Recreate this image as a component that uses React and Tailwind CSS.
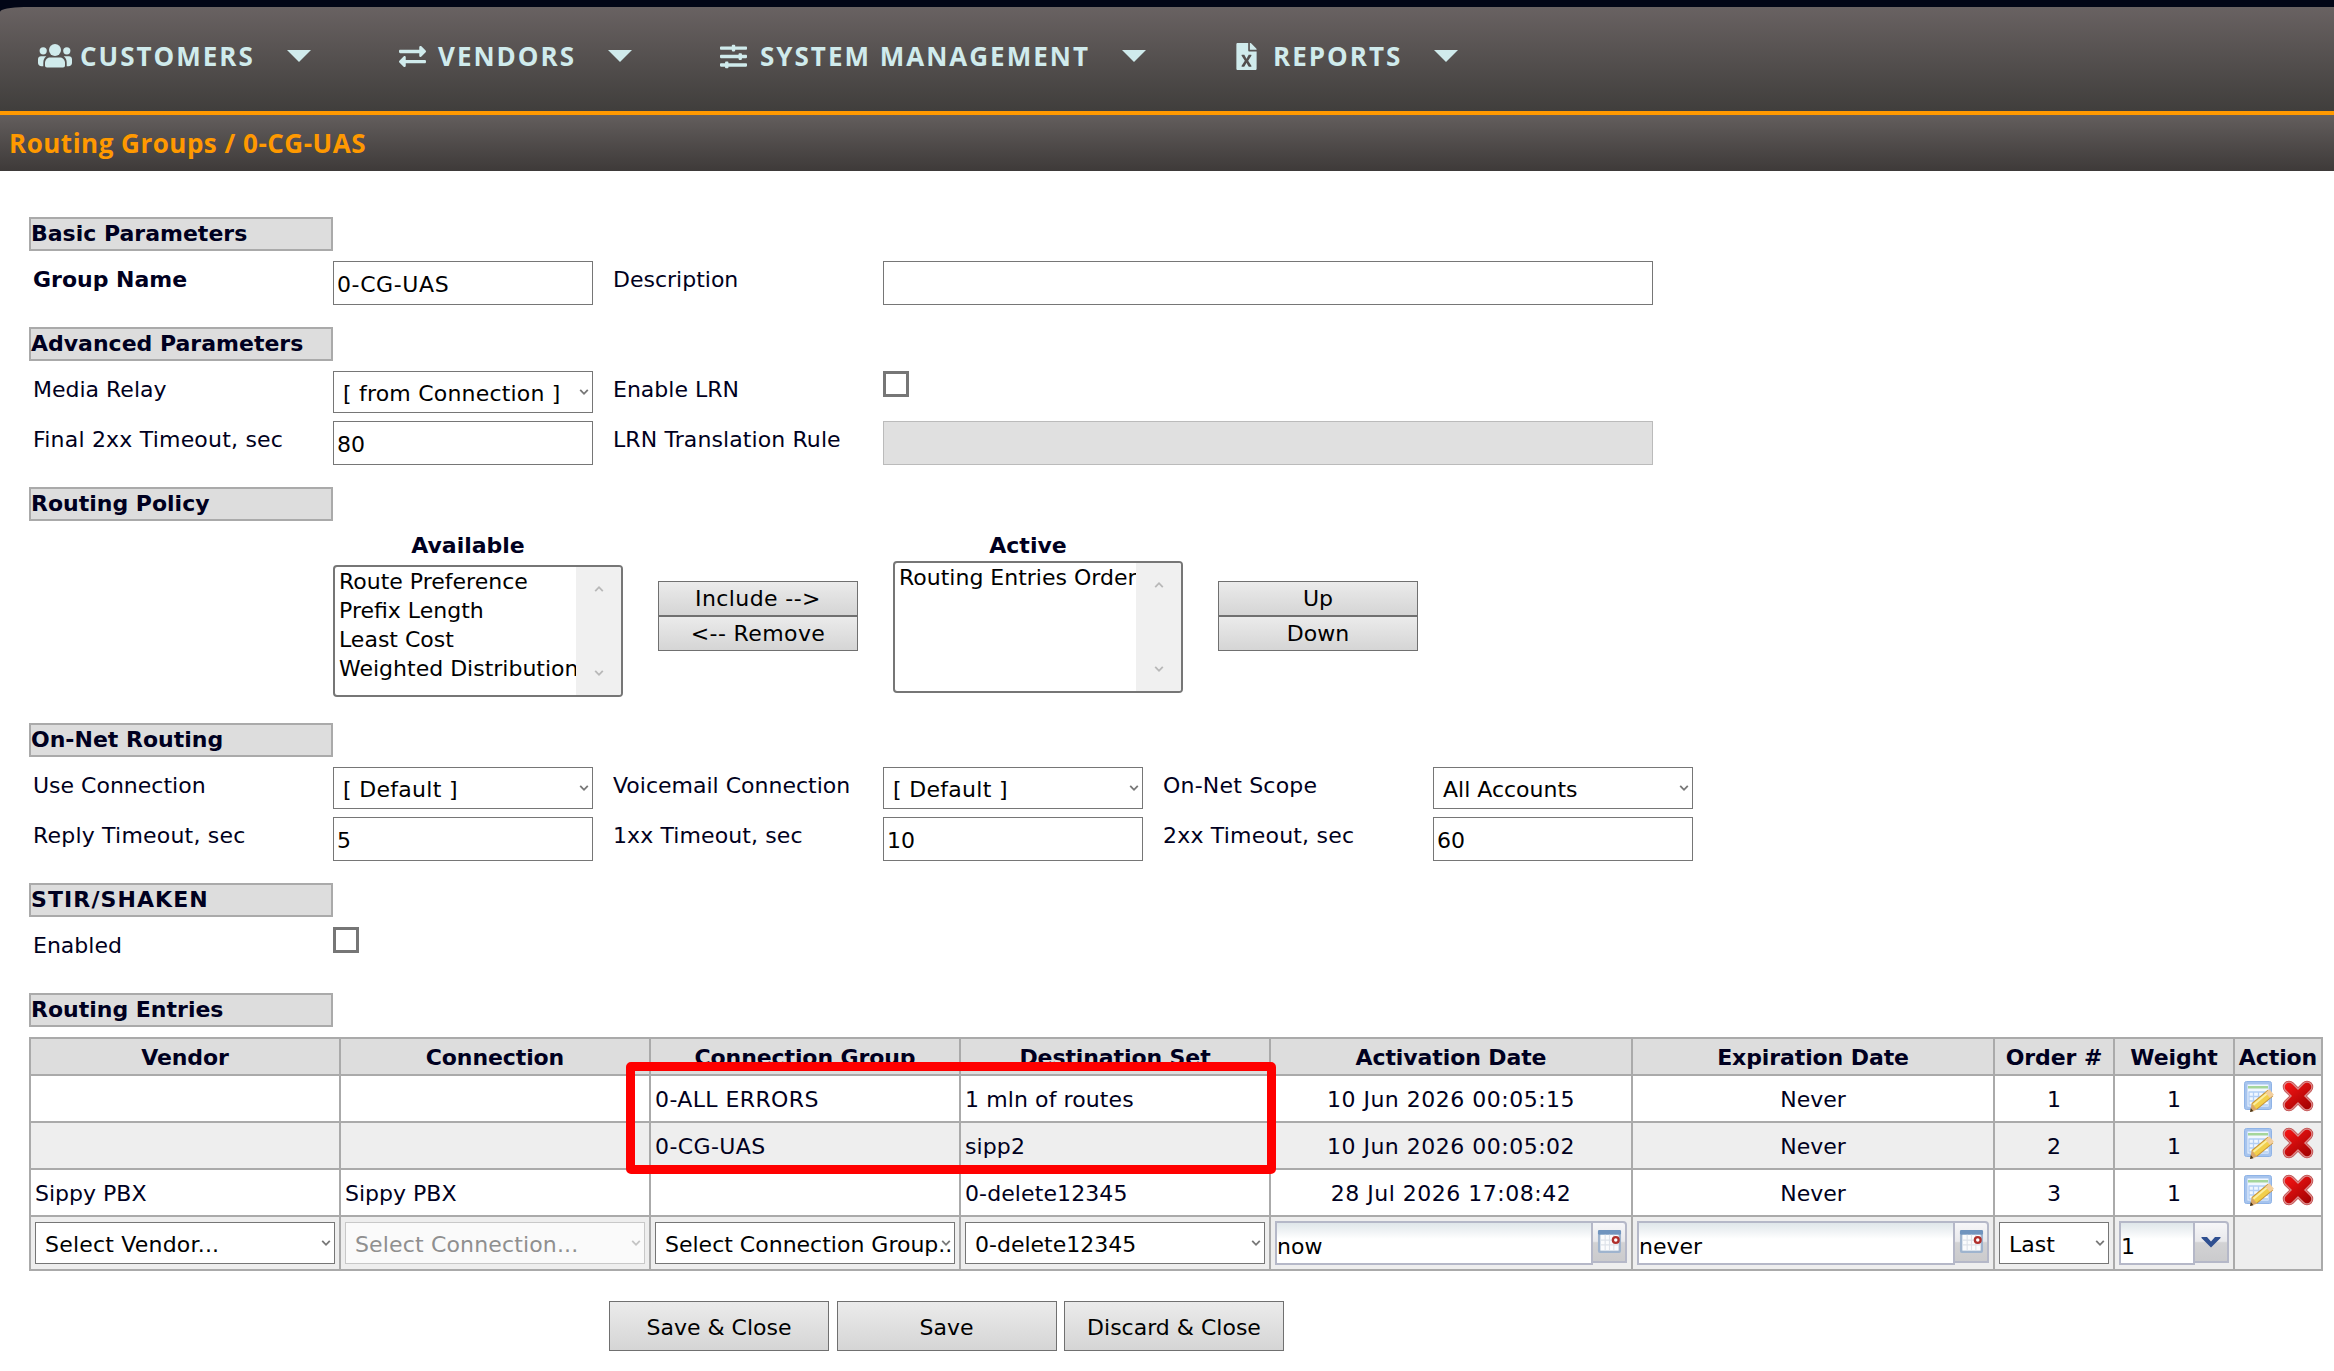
import { useState } from 'react'
import { FaExchangeAlt, FaSlidersH, FaFileExcel } from 'react-icons/fa'

const MENU = [
  { label: 'CUSTOMERS', icon: PeopleIcon, width: 'w-[361px]', iconClass: 'w-[34px] h-[24px] mr-[8px]', textClass: 'w-[207px]' },
  { label: 'VENDORS', icon: FaExchangeAlt, width: 'w-[321px]', iconClass: 'w-[27px] h-[27px] mr-[12px]', textClass: 'w-[170px]' },
  { label: 'SYSTEM MANAGEMENT', icon: FaSlidersH, width: 'w-[516px]', iconClass: 'w-[27px] h-[27px] mr-[13px]', textClass: 'w-[362px]' },
  { label: 'REPORTS', icon: FaFileExcel, width: 'w-[240px]', iconClass: 'w-[21px] h-[27px] mr-[16px]', textClass: 'w-[161px]' },
]

const COLUMNS = [
  'Vendor',
  'Connection',
  'Connection Group',
  'Destination Set',
  'Activation Date',
  'Expiration Date',
  'Order #',
  'Weight',
  'Action',
]

const ENTRIES = [
  { group: '0-ALL ERRORS', destination: '1 mln of routes', activation: '10 Jun 2026 00:05:15', expiration: 'Never', order: 1, weight: 1 },
  { group: '0-CG-UAS', destination: 'sipp2', activation: '10 Jun 2026 00:05:02', expiration: 'Never', order: 2, weight: 1 },
  { vendor: 'Sippy PBX', connection: 'Sippy PBX', destination: '0-delete12345', activation: '28 Jul 2026 17:08:42', expiration: 'Never', order: 3, weight: 1 },
]

function PeopleIcon({ className }) {
  return (
    <svg viewBox="0 0 34 24" fill="currentColor" className={className}>
      <circle cx="17" cy="6" r="6" />
      <circle cx="5.2" cy="6.8" r="3.6" />
      <circle cx="28.8" cy="6.8" r="3.6" />
      <path d="M12 13.5h10c3 0 5 2.5 5 5.500v2.500c0 1.200-.8 2-2 2H9c-1.200 0-2-.8-2-2V19c0-3 2-5.500 5-5.500z" />
      <path d="M3 12.3h5.300C6.300 13.800 5.300 16 5.300 19v3.200H3.500C1.500 22.200 0 20.800 0 19v-3.700c0-1.700 1.300-3 3-3z" />
      <path d="M31 12.3h-5.300c2 1.500 3 3.700 3 6.700v3.200h1.800c2 0 3.500-1.400 3.500-3.200v-3.700c0-1.700-1.300-3-3-3z" />
    </svg>
  )
}

function Chevron({ className = '', up = false }) {
  return (
    <svg viewBox="0 0 10 8" fill="none" className={`w-[10px] h-[8px] ${className}`}>
      <path
        d={up ? 'M1.2 6.2 5 2.2l3.8 4' : 'M1.2 1.8 5 5.8l3.8-4'}
        stroke="currentColor"
        strokeWidth="1.8"
      />
    </svg>
  )
}

function SectionTitle({ children, className = '' }) {
  return (
    <h2
      className={`w-[304px] h-[34px] mb-[10px] border-2 border-[#aaa] bg-[#ddd] font-bold leading-[30px] whitespace-nowrap ${className}`}
    >
      {children}
    </h2>
  )
}

function Row({ children }) {
  return <div className="flex h-[50px]">{children}</div>
}

function Label({ children, className = 'w-[290px] pl-[20px]' }) {
  return <div className={`pt-[6px] leading-[26px] whitespace-nowrap ${className}`}>{children}</div>
}

function TextField({ value = '', disabled = false, className = 'w-[260px]' }) {
  const [text, setText] = useState(value)
  return (
    <input
      value={text}
      disabled={disabled}
      onChange={(e) => setText(e.target.value)}
      className={`h-[44px] border pl-[3px] pt-[3px] ${
        disabled ? 'bg-[#e0e0e0] border-[#bbb]' : 'bg-white border-[#767676] text-black'
      } ${className}`}
    />
  )
}

function Select({ children, disabled = false, className = 'w-[260px]' }) {
  return (
    <div
      className={`relative flex h-[42px] shrink-0 items-center overflow-hidden border pl-[9px] pt-[3px] whitespace-nowrap ${
        disabled ? 'border-[#c8c8c8] bg-[#fafafa] text-[#8f8f8f]' : 'border-[#767676] bg-white text-black'
      } ${className}`}
    >
      {children}
      <Chevron
        className={`absolute right-[3px] top-[16px] ${disabled ? 'text-[#c4c4c4]' : 'text-[#777]'}`}
      />
    </div>
  )
}

function CheckBox() {
  const [checked, setChecked] = useState(false)
  return (
    <button
      role="checkbox"
      aria-checked={checked}
      onClick={() => setChecked(!checked)}
      className={`w-[26px] h-[26px] border-[3px] border-[#767676] ${checked ? 'bg-[#767676]' : 'bg-white'}`}
    />
  )
}

function ListBox({ items }) {
  return (
    <div className="flex w-[290px] h-[132px] rounded border-2 border-[#767676] bg-white text-black overflow-hidden">
      <ul className="w-[241px] pl-[4px]">
        {items.map((item) => (
          <li key={item} className="h-[29px] leading-[29px] whitespace-nowrap">
            {item}
          </li>
        ))}
      </ul>
      <div className="flex flex-1 flex-col items-center justify-between bg-[#f0f0f0] pt-[18px] pb-[18px] text-[#b8b8b8]">
        <Chevron up />
        <Chevron />
      </div>
    </div>
  )
}

function Button({ children, className }) {
  return (
    <button
      className={`border border-[#707070] bg-gradient-to-b from-[#ebebeb] to-[#d5d5d5] text-black whitespace-nowrap ${className}`}
    >
      {children}
    </button>
  )
}

function CalendarIcon() {
  return (
    <svg viewBox="0 0 26 26" className="w-[25px] h-[25px]">
      <rect x="1" y="1" width="24" height="24" rx="2" fill="#9fb4ce" />
      <rect x="1" y="1" width="24" height="5" rx="1.5" fill="#7094be" />
      <rect x="3.5" y="6" width="19" height="16.500" fill="#fbfcfd" />
      <path d="M4 11.5h18M4 16.5h18M8.5 6v16M13 6v16M17.5 6v16" stroke="#dde2e9" strokeWidth="1.2" />
      <circle cx="19.5" cy="11.5" r="3" fill="#fff" stroke="#b0302c" strokeWidth="2.4" />
    </svg>
  )
}

function TriggerField({ value, inputClass, children }) {
  return (
    <div className="flex items-start">
      <div
        className={`h-[44px] border-2 border-[#b5b8c8] bg-gradient-to-b from-[#dfe6ea] to-white to-40% pt-[6px] leading-[36px] text-black ${inputClass}`}
      >
        {value}
      </div>
      <div className="flex w-[34px] h-[42px] justify-center rounded-tr border-t-2 border-r-2 border-b-2 border-[#b5b8c8] bg-[linear-gradient(#f6f6f8_0%,#e9e9ec_48%,#d2d2d4_52%,#cbcbcd_100%)] pt-[6px]">
        {children}
      </div>
    </div>
  )
}

function EditIcon() {
  return (
    <svg viewBox="0 0 32 32" className="w-[32px] h-[32px]">
      <rect x="1.5" y="1.5" width="27" height="28" rx="2" fill="#a6c4ee" stroke="#8fb3e6" />
      <rect x="4.5" y="4.5" width="21" height="22" fill="#f1f7ff" />
      <rect x="5" y="6" width="20" height="2.5" fill="#a5d69b" />
      <path d="M5.5 12h19.5M5.5 16.5h19.5M5.5 21h19.5M5.5 25h19.5M6 12v13M10.5 12v13M15.5 12v13M20.5 12v13" stroke="#b3cff5" strokeWidth="1.3" />
      <path d="M11.2 26.6 27.5 13" stroke="#c99436" strokeWidth="8.5" />
      <path d="M11.2 26.6 25.2 15" stroke="#f2cf4c" strokeWidth="6.5" />
      <path d="M10.5 24.8 23.7 13.8" stroke="#fbeea0" strokeWidth="2" />
      <path d="M24.7 15.4 28.7 12" stroke="#f3cf9d" strokeWidth="7" />
      <path d="m8.5 23.3 5.400 6.500-6.400 2z" fill="#dba766" />
      <path d="m7.800 28 2.700 3.200-3.500.8z" fill="#4a3416" />
    </svg>
  )
}

function DeleteIcon() {
  return (
    <svg viewBox="0 0 32 32" fill="none" strokeLinecap="round" className="w-[32px] h-[32px]">
      <defs>
        <linearGradient id="cross" gradientUnits="userSpaceOnUse" x1="4" y1="2" x2="24" y2="28">
          <stop offset="0" stopColor="#f81414" />
          <stop offset="1" stopColor="#a80404" />
        </linearGradient>
      </defs>
      <path d="m7 7 18 18M25 7 7 25" stroke="#bf4a4a" strokeWidth="12.5" />
      <path d="m7 7 18 18M25 7 7 25" stroke="#dc8c8c" strokeWidth="11" />
      <path d="m7 7 18 18M25 7 7 25" stroke="url(#cross)" strokeWidth="8.5" />
    </svg>
  )
}

function EntryRow({ entry, shaded }) {
  const bg = shaded ? 'bg-[#eee]' : 'bg-white'
  const left = `${bg} pl-[4px] pt-[2px] leading-[43px] whitespace-nowrap`
  const center = `${bg} pt-[2px] text-center leading-[43px] whitespace-nowrap`
  return (
    <>
      <div className={left}>{entry.vendor}</div>
      <div className={left}>{entry.connection}</div>
      <div className={`${left} tracking-[0.4px]`}>{entry.group}</div>
      <div className={`${left} tracking-[0.1px]`}>{entry.destination}</div>
      <div className={`${center} tracking-[0.5px]`}>{entry.activation}</div>
      <div className={center}>{entry.expiration}</div>
      <div className={center}>{entry.order}</div>
      <div className={center}>{entry.weight}</div>
      <div className={`${bg} flex gap-[7px] pl-[8px] pt-[4px]`}>
        <EditIcon />
        <DeleteIcon />
      </div>
    </>
  )
}

function EntriesTable() {
  return (
    <div className="relative w-[2294px]">
      <div className="grid grid-cols-[308px_308px_308px_308px_360px_360px_118px_118px_86px] grid-rows-[35px_45px_45px_45px_52px] gap-[2px] border-2 border-[#aaa] bg-[#aaa]">
        {COLUMNS.map((name) => (
          <div key={name} className="bg-[#ddd] pt-[2px] text-center font-bold leading-[33px] tracking-[-0.1px] whitespace-nowrap">
            {name}
          </div>
        ))}

        {ENTRIES.map((entry, i) => (
          <EntryRow key={entry.order} entry={entry} shaded={i % 2 === 1} />
        ))}

        {/* New entry */}
        <div className="bg-[#eee] pl-[4px] pt-[5px]">
          <Select className="w-[300px] tracking-[0.2px]">Select Vendor...</Select>
        </div>
        <div className="bg-[#eee] pl-[4px] pt-[5px]">
          <Select className="w-[300px] tracking-[0.15px]" disabled>Select Connection...</Select>
        </div>
        <div className="bg-[#eee] pl-[4px] pt-[5px]">
          <Select className="w-[300px]">Select Connection Group...</Select>
        </div>
        <div className="bg-[#eee] pl-[4px] pt-[5px]">
          <Select className="w-[300px]">0-delete12345</Select>
        </div>
        <div className="bg-[#eee] pl-[4px] pt-[4px]">
          <TriggerField value="now" inputClass="w-[318px]">
            <CalendarIcon />
          </TriggerField>
        </div>
        <div className="bg-[#eee] pl-[4px] pt-[4px]">
          <TriggerField value="never" inputClass="w-[318px]">
            <CalendarIcon />
          </TriggerField>
        </div>
        <div className="bg-[#eee] pl-[4px] pt-[5px]">
          <Select className="w-[110px]">Last</Select>
        </div>
        <div className="bg-[#eee] pl-[4px] pt-[4px]">
          <TriggerField value="1" inputClass="w-[76px]">
            <svg viewBox="0 0 20 11" className="mt-[8px] w-[20px] h-[11px]">
              <path d="M.5 0h5.500L10 4.500 14 0h5.500v1L10 10.500.5 1z" fill="#2f4f90" />
            </svg>
          </TriggerField>
        </div>
        <div className="bg-[#eee]" />
      </div>

      {/* Highlight around the connection group / destination set pair */}
      <div className="pointer-events-none absolute left-[597px] top-[25px] w-[650px] h-[112px] rounded-[5px] border-[9px] border-[#f00]" />
    </div>
  )
}

export default function App() {
  return (
    <div className="w-[2334px] h-[1371px] overflow-hidden bg-white font-['DejaVu_Sans',sans-serif] text-[22px] text-[#000020]">
      {/* Navigation */}
      <div className="bg-[#020616] pt-[7px]">
        <nav className="flex h-[104px] items-start [border-top-left-radius:24px_5px] bg-gradient-to-b from-[#696262] to-[#403e3c] pl-[38px] pt-[32px] font-['Open_Sans',sans-serif] text-[26px] font-bold tracking-[2px] text-[#d0ebec]">
          {MENU.map(({ label, icon: Icon, width, iconClass, textClass }) => (
            <a key={label} className={`flex h-[34px] shrink-0 items-center ${width}`}>
              <Icon className={`shrink-0 ${iconClass}`} />
              <span className={`shrink-0 whitespace-nowrap ${textClass}`}>{label}</span>
              <svg viewBox="0 0 24 12" className="w-[24px] h-[12px] shrink-0">
                <path d="M0 0h24L12 12z" fill="currentColor" />
              </svg>
            </a>
          ))}
        </nav>
      </div>
      <div className="h-[60px] border-t-4 border-[#f90] bg-gradient-to-b from-[#635e5d] to-[#3e3a39] pl-[9px] font-['Open_Sans',sans-serif] text-[26px] font-bold leading-[56px] tracking-[0.5px] text-[#f90]">
        Routing Groups / 0-CG-UAS
      </div>

      <main className="pl-[29px] pt-[46px]">
        <section className="h-[110px]">
          <SectionTitle>Basic Parameters</SectionTitle>
          <Row>
            <Label className="w-[304px] pl-[4px] font-bold">Group Name</Label>
            <TextField value="0-CG-UAS" className="w-[260px] tracking-[0.6px]" />
            <Label>Description</Label>
            <TextField className="w-[770px]" />
          </Row>
        </section>

        <section className="h-[160px]">
          <SectionTitle>Advanced Parameters</SectionTitle>
          <Row>
            <Label className="w-[304px] pl-[4px]">Media Relay</Label>
            <Select className="w-[260px] tracking-[0.2px]">[ from Connection ]</Select>
            <Label>Enable LRN</Label>
            <CheckBox />
          </Row>
          <Row>
            <Label className="w-[304px] pl-[4px] tracking-[0.2px]">Final 2xx Timeout, sec</Label>
            <TextField value="80" />
            <Label className="w-[290px] pl-[20px] tracking-[0.1px]">LRN Translation Rule</Label>
            <TextField className="w-[770px]" disabled />
          </Row>
        </section>

        <section className="h-[236px]">
          <SectionTitle>Routing Policy</SectionTitle>
          <div className="flex pl-[304px]">
            <div className="w-[325px]">
              <h3 className="w-[270px] h-[34px] text-center font-bold leading-[29px]">Available</h3>
              <ListBox
                items={['Route Preference', 'Prefix Length', 'Least Cost', 'Weighted Distribution']}
              />
            </div>
            <div className="flex w-[235px] flex-col pt-[50px] tracking-[0.4px]">
              <Button className="w-[200px] h-[35px]">Include --&gt;</Button>
              <Button className="w-[200px] h-[35px]">&lt;-- Remove</Button>
            </div>
            <div className="w-[325px]">
              <h3 className="w-[270px] h-[30px] text-center font-bold leading-[29px]">Active</h3>
              <ListBox items={['Routing Entries Order']} />
            </div>
            <div className="flex flex-col pt-[50px]">
              <Button className="w-[200px] h-[35px]">Up</Button>
              <Button className="w-[200px] h-[35px]">Down</Button>
            </div>
          </div>
        </section>

        <section className="h-[160px]">
          <SectionTitle>On-Net Routing</SectionTitle>
          <Row>
            <Label className="w-[304px] pl-[4px]">Use Connection</Label>
            <Select className="w-[260px] tracking-[0.3px]">[ Default ]</Select>
            <Label>Voicemail Connection</Label>
            <Select className="w-[260px] tracking-[0.3px]">[ Default ]</Select>
            <Label className="w-[290px] pl-[20px] tracking-[0.2px]">On-Net Scope</Label>
            <Select>All Accounts</Select>
          </Row>
          <Row>
            <Label className="w-[304px] pl-[4px] tracking-[0.2px]">Reply Timeout, sec</Label>
            <TextField value="5" />
            <Label className="w-[290px] pl-[20px] tracking-[0.1px]">1xx Timeout, sec</Label>
            <TextField value="10" />
            <Label className="w-[290px] pl-[20px] tracking-[0.2px]">2xx Timeout, sec</Label>
            <TextField value="60" />
          </Row>
        </section>

        <section className="h-[110px]">
          <SectionTitle className="tracking-[1.1px]">STIR/SHAKEN</SectionTitle>
          <Row>
            <Label className="w-[304px] pl-[4px]">Enabled</Label>
            <CheckBox />
          </Row>
        </section>

        <section>
          <SectionTitle>Routing Entries</SectionTitle>
          <EntriesTable />
        </section>

        <div className="flex gap-[7.5px] pl-[580px] pt-[30px]">
          <Button className="w-[220px] h-[50px] pt-[2px]">Save &amp; Close</Button>
          <Button className="w-[220px] h-[50px] pt-[2px]">Save</Button>
          <Button className="w-[220px] h-[50px] pt-[2px]">Discard &amp; Close</Button>
        </div>
      </main>
    </div>
  )
}
